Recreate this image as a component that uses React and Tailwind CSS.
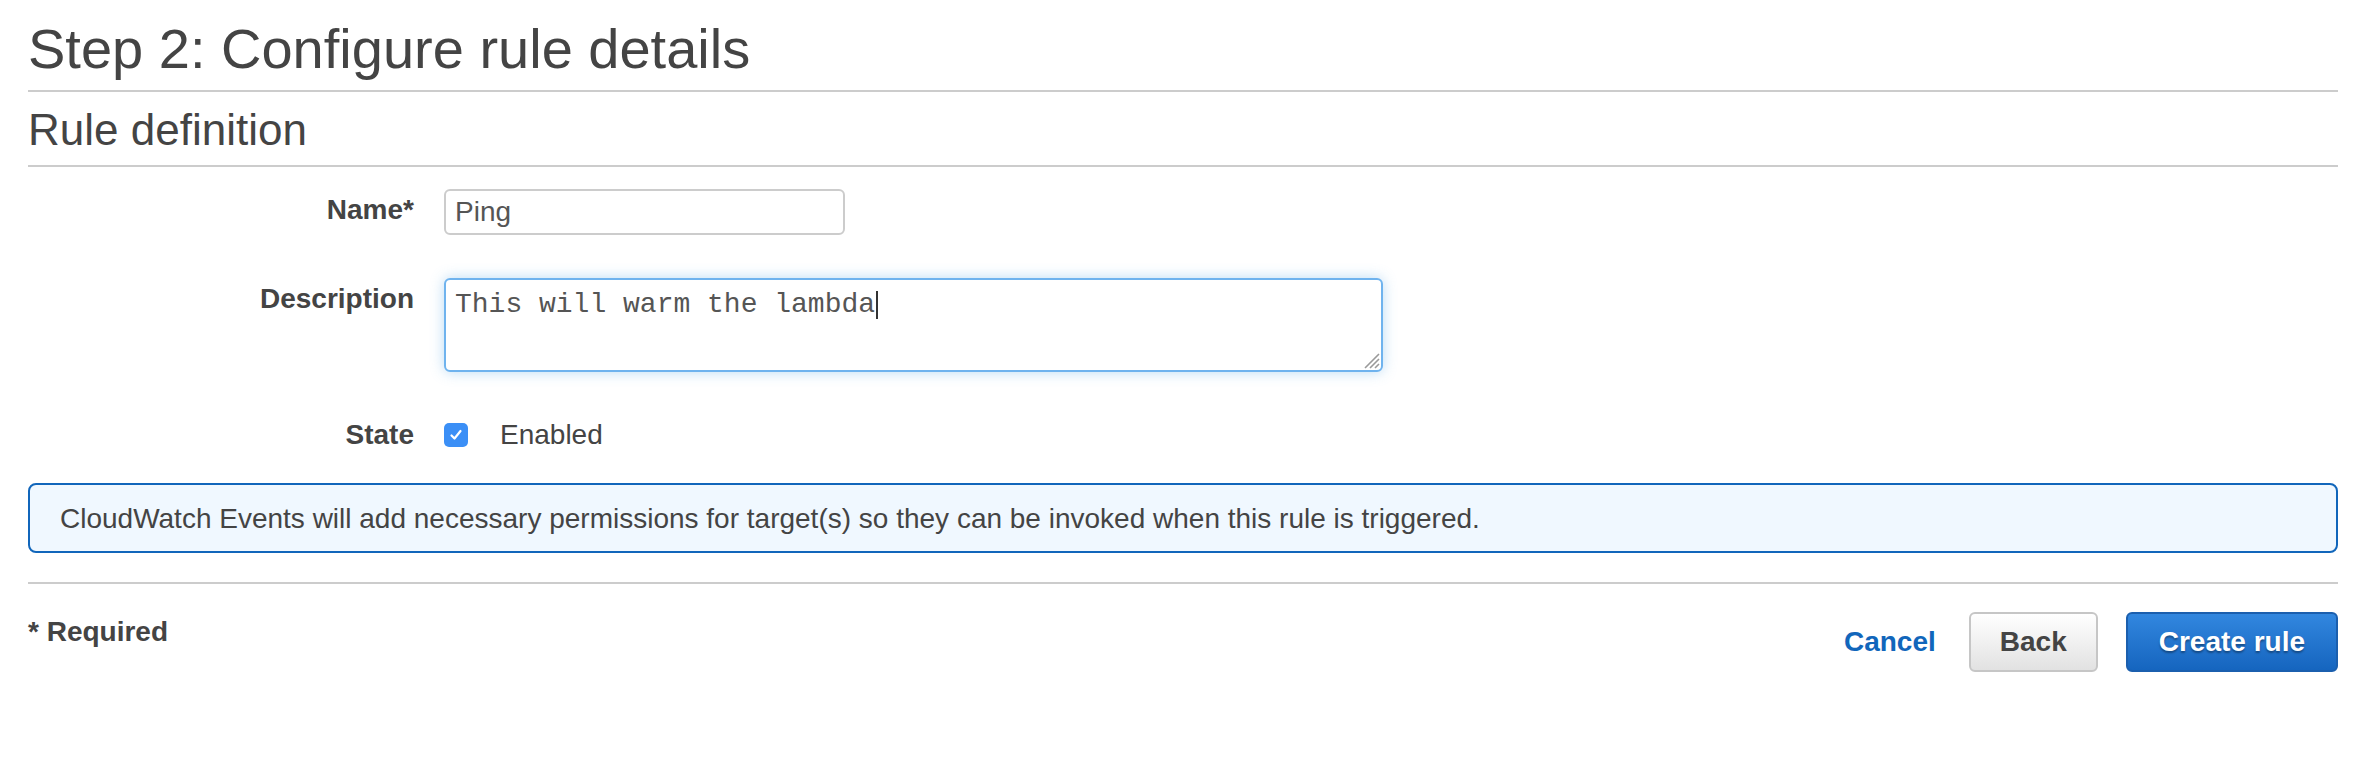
export default function App() {
  const font = { fontFamily: "'Liberation Sans', Arial, sans-serif" }

  return (
    <div className="w-full h-[772px] bg-white pl-[28px] pr-[40px] text-[#444444]" style={font}>
      {/* page heading */}
      <h1 className="pt-[17px] pb-[9px] text-[56px] leading-[64px] font-normal border-b-2 border-[#cccccc]">
        Step 2: Configure rule details
      </h1>
      <h2 className="pt-[14px] pb-[11px] text-[44px] leading-[48px] font-normal border-b-2 border-[#cccccc]">
        Rule definition
      </h2>

      {/* form rows */}
      <div className="flex items-start gap-[30px] mt-[22px]">
        <label className="w-[386px] shrink-0 text-right text-[28px] leading-[42px] font-bold">Name*</label>
        <div className="w-[401px] h-[46px] border-2 border-[#cccccc] rounded-[6px] px-[9px] text-[28px] leading-[42px] text-[#555555]">
          Ping
        </div>
      </div>

      <div className="flex items-start gap-[30px] mt-[43px]">
        <label className="w-[386px] shrink-0 text-right text-[28px] leading-[42px] font-bold">Description</label>
        <div className="relative w-[939px] h-[94px] border-2 border-[#6fb3ee] rounded-[6px] bg-white px-[9px] pt-[9px] shadow-[0_0_14px_rgba(102,175,233,0.45)]">
          <div className="flex items-center text-[28px] leading-[32px] text-[#555555]" style={{ fontFamily: "'Liberation Mono', 'Courier New', monospace" }}>
            <span className="whitespace-pre">This will warm the lambda</span>
            <span className="ml-[1px] w-[2px] h-[28px] bg-[#333333]" />
          </div>
          <svg className="absolute right-[1px] bottom-[1px]" width="18" height="18" viewBox="0 0 18 18">
            <path d="M17 3 L3 17 M17 8 L8 17 M17 13 L13 17" stroke="#9a9a9a" strokeWidth="1.6" fill="none" />
          </svg>
        </div>
      </div>

      <div className="flex items-center gap-[30px] mt-[42px]">
        <label className="w-[386px] shrink-0 text-right text-[28px] leading-[42px] font-bold">State</label>
        <div className="flex items-center gap-[32px]">
          <span className="w-[24px] h-[24px] rounded-[5px] bg-[#3b8ff6] flex items-center justify-center">
            <svg width="16" height="16" viewBox="0 0 16 16">
              <path d="M3.5 8.5 L6.5 11.5 L12.5 4" stroke="white" strokeWidth="2.2" fill="none" strokeLinecap="round" strokeLinejoin="round" />
            </svg>
          </span>
          <span className="text-[28px] leading-[42px]">Enabled</span>
        </div>
      </div>

      {/* info notice */}
      <div className="mt-[27px] h-[70px] border-2 border-[#1166bb] rounded-[8px] bg-[#f0f8ff] px-[30px] pt-[2px] text-[28px] leading-[64px]">
        CloudWatch Events will add necessary permissions for target(s) so they can be invoked when this rule is triggered.
      </div>

      <div className="mt-[29px] h-[2px] bg-[#cccccc]" />

      {/* footer */}
      <div className="flex items-start justify-between pt-[28px]">
        <span className="text-[28px] leading-[40px] font-bold">* Required</span>
        <div className="flex items-center">
          <a className="text-[28px] font-bold text-[#1166bb] leading-[60px] mr-[33px]">Cancel</a>
          <button className="h-[60px] px-[29px] border-2 border-[#c6c6c6] rounded-[6px] bg-gradient-to-b from-[#ffffff] to-[#e2e2e2] text-[28px] font-bold text-[#444444] mr-[28px]">
            Back
          </button>
          <button className="h-[60px] px-[31px] border-2 border-[#1b5fae] rounded-[6px] bg-gradient-to-b from-[#3287df] to-[#1565bf] text-[28px] font-bold text-white [text-shadow:0_2px_2px_rgba(0,0,0,0.35)]">
            Create rule
          </button>
        </div>
      </div>
    </div>
  )
}
